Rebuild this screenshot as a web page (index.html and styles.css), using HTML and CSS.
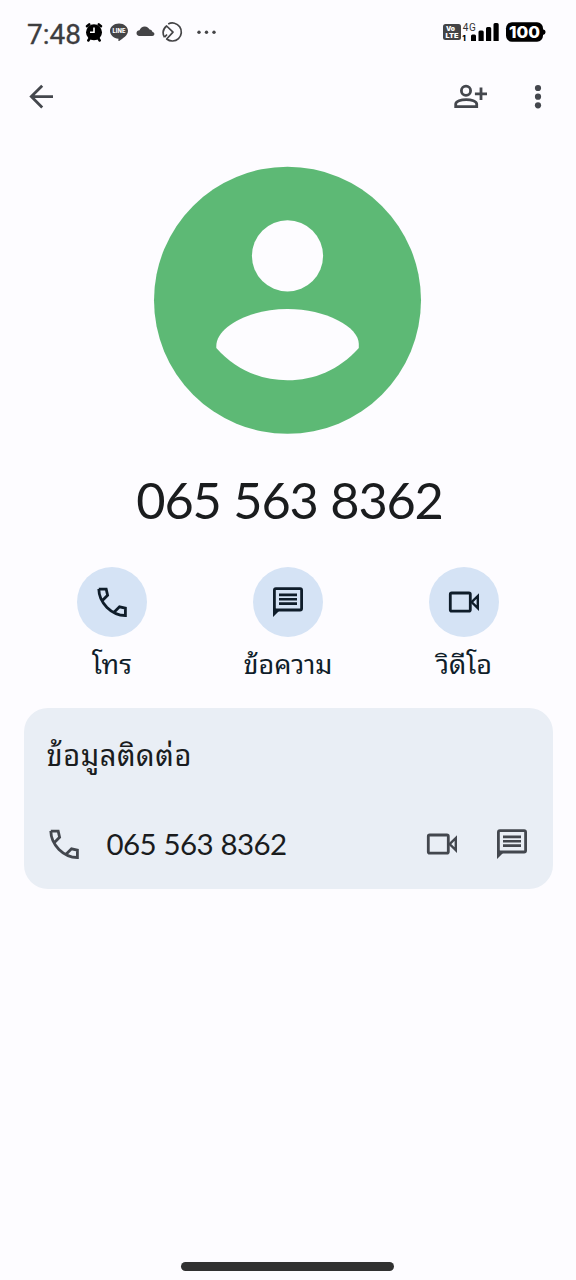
FILE: index.html
```html
<!DOCTYPE html>
<html lang="th">
<head>
<meta charset="utf-8">
<title>065 563 8362</title>
<link rel="stylesheet" href="styles.css">
</head>
<body>
<svg class="defs" width="0" height="0" aria-hidden="true">
  <symbol id="call" viewBox="0 0 36 36"><path class="line" d="M4.8 5.1C5 19 17.5 31.3 31.4 31.5V24.2L25.5 22.8L20.3 28M4.8 5.1H12.2L13.6 11.2L8.4 16.4"/></symbol>
  <symbol id="message" viewBox="0 0 36 36"><rect class="line" x="4.4" y="4.7" width="27.2" height="21.3" rx="1.5"/><path class="solid" d="M3 24V33L10 26ZM9 9.5h18v2.700H9zM9 13.900h18v2.700H9zM9 18.300h18v2.700H9z"/></symbol>
  <symbol id="video" viewBox="0 0 36 36"><rect class="line" x="4.3" y="9" width="20" height="18.1" rx="1.4"/><path class="line slim" d="M25.6 18.1L31.8 12V24.2Z"/></symbol>
</svg>
<div class="screen">
  <header class="status">
    <div class="status-left">
      <span class="clock">7:48</span>
      <svg class="status-icons" width="135" height="26" viewBox="83 19 135 26">
        <circle cx="94" cy="32.3" r="8"/>
        <path class="ink" stroke-width="2.6" stroke-linecap="round" d="M87 26.2l2.2-1.8M101 26.2l-2.2-1.8M89.6 38.5l-1.3 2M98.4 38.5l1.3 2"/>
        <path fill="none" stroke="#fff" stroke-width="1.6" d="M94 27.5V32.2H90"/>
        <path class="grey" d="M119 23.4c5 0 9 3.3 9 7.4 0 4.7-5.3 7.700-8.800 10.100-.9.500-.9-.200-.7-2.200-4.800-.3-8.500-3.600-8.500-7.900 0-4.100 4-7.400 9-7.400z"/>
        <text x="112.600" y="33.400" textLength="12.800" lengthAdjust="spacingAndGlyphs" class="line-word">LINE</text>
        <path class="grey" d="M139.500 36c-2 0-3-1.200-3-2.900 0-1.700 1.300-2.800 3-2.900.9-2.500 2.800-3.800 5.200-3.800 2.400 0 4.100 1.300 4.900 3.200 1.600.1 2.500 1.100 2.900 2.500 1.200.3 1.900 1.100 1.900 2 0 1.200-1 1.900-2.200 1.900z"/>
        <path class="ring" d="M168.200 24A9 9 0 1 1 166.700 39L173 32.200L166.600 26C161.500 30 163 35 164.500 37.200M164.500 37.200L167 34.500"/>
        <circle class="grey" cx="199" cy="32.200" r="1.700"/><circle class="grey" cx="206.500" cy="32.200" r="1.700"/><circle class="grey" cx="214" cy="32.200" r="1.700"/>
      </svg>
    </div>
    <svg class="status-right" width="104" height="24" viewBox="442 20 104 24">
      <rect class="grey" x="443" y="24" width="18" height="16" rx="2.500"/>
      <text class="volte" x="446" y="30.900" textLength="9" lengthAdjust="spacingAndGlyphs">Vo</text>
      <text class="volte" x="445.500" y="38.400" textLength="13" lengthAdjust="spacingAndGlyphs">LTE</text>
      <text class="net" x="462.700" y="31" textLength="13">4G</text>
      <text class="sim" x="462.300" y="41">1</text>
      <path d="M471 36q0-1.500 1.500-1.500h2q1.500 0 1.500 1.500v5h-5z"/>
      <path d="M478.500 32q0-1.500 1.500-1.500h2.200q1.500 0 1.500 1.500v9h-5.200zM486 28.500q0-1.500 1.500-1.500h2.200q1.500 0 1.500 1.500V41H486zM493.500 24.500q0-1.500 1.500-1.500h2.200q1.500 0 1.500 1.500V41h-5.200z"/>
      <rect x="506" y="22.300" width="37" height="19.400" rx="6"/>
      <path d="M543 29.200q2.600.6 2.600 2.900t-2.600 2.900z"/>
      <text class="battery" x="509" y="38" textLength="31" lengthAdjust="spacingAndGlyphs">100</text>
    </svg>
  </header>
  <nav class="appbar">
    <svg class="back" width="28" height="28" viewBox="28 83 28 28"><path class="line" d="M53 96.600H31.500M42.200 85.700L31.300 96.600L42.200 107.500"/></svg>
    <svg class="add" width="36" height="28" viewBox="452 83 36 28"><circle class="line" cx="466" cy="90.800" r="4.600"/><path class="line" d="M455.700 106.700V104C455.700 101.300 461 99.600 466.200 99.600S476.700 101.300 476.700 104V106.700ZM481 87.600V100M474.900 93.800H487"/></svg>
    <svg class="more" width="8" height="28" viewBox="534 83 8 28"><circle cx="538" cy="88" r="3.100"/><circle cx="538" cy="96.700" r="3.100"/><circle cx="538" cy="105.300" r="3.100"/></svg>
  </nav>
  <main>
    <svg class="avatar" width="268" height="268" viewBox="0 0 268 268"><circle cx="133.500" cy="133.300" r="133.500"/><circle class="paper" cx="133.500" cy="88.800" r="35.600"/><path class="paper" d="M62.300 179C62.300 160 95 142 133.500 142S204.800 160 204.800 177V181C185 203 160 213.300 133.500 213.300S82 203 62.300 181Z"/></svg>
    <h1 class="number">065 563 8362</h1>
    <div class="actions">
      <div class="action"><span class="bubble"><svg class="icon"><use href="#call"/></svg></span><span class="label">โทร</span></div>
      <div class="action"><span class="bubble"><svg class="icon"><use href="#message"/></svg></span><span class="label">ข้อความ</span></div>
      <div class="action"><span class="bubble"><svg class="icon"><use href="#video"/></svg></span><span class="label">วิดีโอ</span></div>
    </div>
    <section class="card">
      <h2 class="card-title">ข้อมูลติดต่อ</h2>
      <div class="contact">
        <svg class="icon"><use href="#call"/></svg>
        <span class="phone">065 563 8362</span>
        <svg class="icon"><use href="#video"/></svg>
        <svg class="icon"><use href="#message"/></svg>
      </div>
    </section>
  </main>
  <div class="handle"></div>
</div>
</body>
</html>
```
FILE: styles.css
```css
* { box-sizing: border-box; }
body { margin: 0; background: #fdfcff; color: #1a1c1e; font-family: Lato, "Noto Sans Thai Looped", Loma, Waree, Garuda, "Noto Sans Thai", "Noto Sans", sans-serif; }
.defs { display: block; }
.screen { width: 576px; height: 1280px; display: flex; flex-direction: column; overflow: hidden; }
.status { height: 64px; padding: 19px 30px 0 27px; display: flex; justify-content: space-between; align-items: flex-start; }
.status-left { display: flex; }
.clock { width: 56px; font: 28px/32px Roboto, sans-serif; color: #3d3d3f; -webkit-text-stroke: 0.3px #3d3d3f; }
.status-right { margin-top: 1px; }
.status text { font-family: Inter, sans-serif; }
.grey { fill: #444446; }
.ink { fill: none; stroke: #000; }
.ring { fill: none; stroke: #444446; stroke-width: 1.7; stroke-linejoin: round; }
.status .line-word { font-size: 6px; font-weight: 800; fill: #fff; }
.status .volte { font-size: 6px; font-weight: 900; fill: #fff; }
.status .net { font-family: Roboto, sans-serif; font-size: 10px; fill: #333; }
.status .sim { font-size: 8px; font-weight: 800; }
.status .battery { font-size: 16.5px; font-weight: 800; fill: #fff; }
.appbar { height: 66px; padding: 19px 34px 0 28px; display: flex; color: #44474d; }
.add { margin-left: auto; }
.more { margin-left: 46px; fill: currentColor; }
.line { fill: none; stroke: currentColor; stroke-width: 2.8; }
.slim { stroke-width: 2.4; }
.solid { fill: currentColor; }
main { display: flex; flex-direction: column; align-items: center; padding-top: 37px; }
.avatar { display: block; fill: #5db975; overflow: visible; }
.avatar .paper { fill: #fdfcff; }
.number { margin: 35px 0 0 3px; height: 60px; font-size: 50.5px; font-weight: 400; line-height: 60px; letter-spacing: -1.2px; word-spacing: 1px; white-space: nowrap; }
.actions { width: 528px; height: 141px; margin-top: 37px; display: grid; grid-template-columns: repeat(3, 1fr); }
.action { display: flex; flex-direction: column; align-items: center; color: #0f1d2a; }
.bubble { width: 70px; height: 70px; border-radius: 50%; background: #d5e3f5; display: flex; align-items: center; justify-content: center; }
.icon { width: 36px; height: 36px; flex: none; }
.label { margin-top: 8px; font-size: 27px; line-height: 38px; white-space: nowrap; }
.card { width: 529px; height: 181px; border-radius: 24px; background: #e9eef5; padding: 28px 23px 0 23px; }
.card-title { margin: 0; height: 38px; font-size: 29px; font-weight: 400; line-height: 38px; letter-spacing: 0.6px; }
.contact { margin-top: 52px; display: flex; align-items: center; color: #43474e; }
.phone { flex: 1; margin-left: 24.5px; font-size: 29.5px; line-height: 36px; letter-spacing: -0.6px; word-spacing: 0.5px; color: #1a1c1e; }
.contact .icon:first-child { margin-left: -0.5px; }
.contact .icon:last-child { margin-left: 34px; }
.handle { width: 213px; height: 9px; margin: auto auto 9px 181px; border-radius: 5px; background: #313131; flex: none; }
```
